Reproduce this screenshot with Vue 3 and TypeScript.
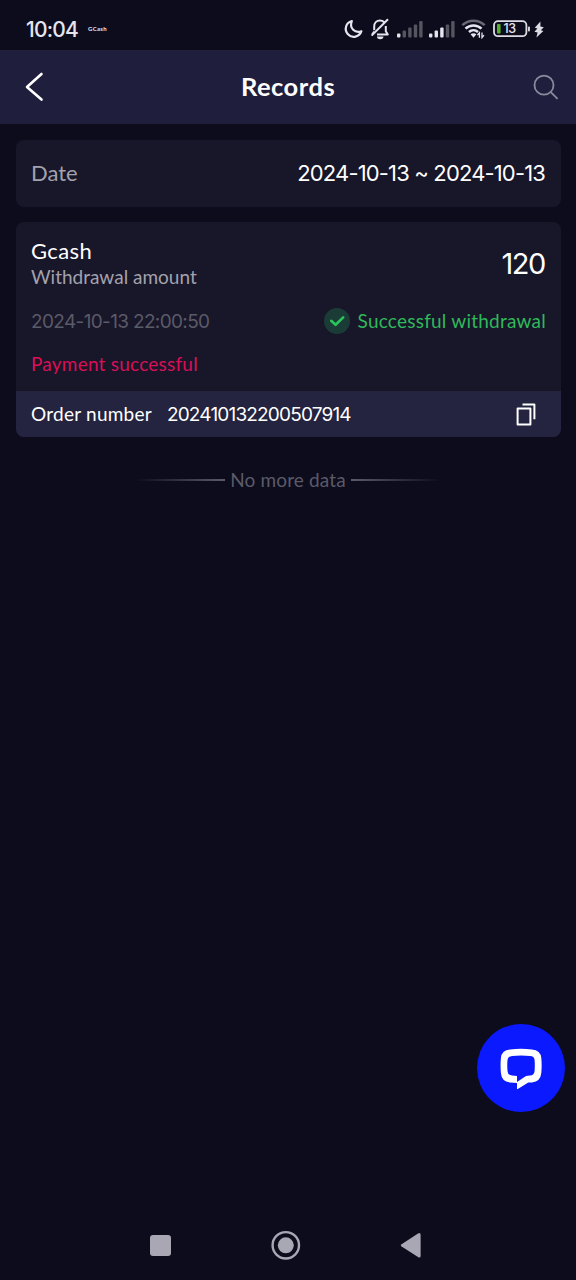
<script setup lang="ts">
interface SignalBar {
  x: number
  h: number
}

const bars: SignalBar[] = [
  { x: 0, h: 4 },
  { x: 5.6, h: 7 },
  { x: 11.2, h: 10 },
  { x: 16.8, h: 13 },
  { x: 22.2, h: 16.5 },
]
const signals: number[] = [1, 3]

const record = {
  channel: 'Gcash',
  kind: 'Withdrawal amount',
  amount: 120,
  time: '2024-10-13 22:00:50',
  status: 'Successful withdrawal',
  note: 'Payment successful',
  order: '202410132200507914',
}
const range = { from: '2024-10-13', to: '2024-10-13' }
</script>

<template>
  <div class="screen">
    <div class="status">
      <span class="clock">10:04</span>
      <span class="carrier">GCash</span>
      <div class="indicators">
        <svg class="moon" width="20" height="20" viewBox="0 0 20 20">
          <path d="M8.8 2A8 8 0 1 0 18.4 12.2C12 14.4 6 9.500 8.800 2Z" />
        </svg>
        <svg class="bell" width="20" height="22" viewBox="0 0 20 22">
          <path d="M4.200 12.200V8.600C4.200 5 6.600 2.500 10 2.500c1.700 0 3 .5 4 1.500M15.800 8v5.200l2 3.300H7M1.600 17.600 18 1.200M2.200 16.500l2-3" />
          <path class="clapper" d="M7 18.600h6.400a3.200 2.600 0 0 1-6.400 0Z" />
        </svg>
        <svg v-for="(level, s) in signals" :key="s" class="signal" width="26" height="18" viewBox="0 0 26 18">
          <rect v-for="(b, i) in bars" :key="i" :x="b.x" :y="17.5 - b.h" width="3.4" :height="b.h" rx="1" :class="{ on: i < level }" />
        </svg>
        <svg class="wifi" width="25" height="20" viewBox="0 0 25 20">
          <path class="dim" d="M1.300 6.200C7.600.1 17.400.1 23.700 6.200" />
          <path d="M4.500 9.600c4.500-4.300 11.500-4.300 16 0M8 13c2.600-2.400 6.400-2.400 9 0" />
          <path class="solid" d="M9.600 15.200c1.700-1.400 4.100-1.400 5.800 0L12.500 18.800Z" />
          <path class="arrows" d="M18.400 18.800v-5l-2 2.400M21 13.600v5l2-2.400" />
        </svg>
        <svg class="battery" width="37" height="18" viewBox="0 0 37 18">
          <rect class="shell" x="1" y="1.200" width="32.400" height="15" rx="4" />
          <rect class="charge" x="4" y="4" width="3.600" height="9.600" rx="1" />
          <rect class="tip" x="35" y="6.400" width="1.900" height="5" rx=".9" />
          <text x="10.400" y="13.300">13</text>
        </svg>
        <svg class="bolt" width="10" height="17" viewBox="0 0 10 17">
          <path d="M6.400.4.8 6.800 3.400 7.600.4 10.800 3.600 11.400 2.400 16.400 9.400 10 6.800 9.200 9.800 6.200 6.400 5.400Z" />
        </svg>
      </div>
    </div>

    <header class="bar">
      <svg class="back" width="20" height="30" viewBox="0 0 20 30">
        <path d="M16.500 2 2 15l14.500 12.600" />
      </svg>
      <h1>Records</h1>
      <svg class="search" width="26" height="26" viewBox="0 0 26 26">
        <circle cx="11" cy="11.200" r="9.500" />
        <path d="m18 18.400 6.600 6.400" />
      </svg>
    </header>

    <main>
      <section class="date">
        <span class="label">Date</span>
        <span class="range">{{ range.from }} ~ {{ range.to }}</span>
      </section>

      <article class="record">
        <div class="body">
          <div class="top">
            <div>
              <div class="channel">{{ record.channel }}</div>
              <div class="kind">{{ record.kind }}</div>
            </div>
            <span class="amount">{{ record.amount }}</span>
          </div>
          <div class="middle">
            <time>{{ record.time }}</time>
            <div class="state">
              <svg width="26" height="26" viewBox="0 0 26 26">
                <circle cx="13" cy="13" r="13" />
                <path d="m7.200 12.800 4.400 4 7.600-7.400" />
              </svg>
              <span>{{ record.status }}</span>
            </div>
          </div>
          <div class="note">{{ record.note }}</div>
        </div>
        <footer>
          <span class="order-label">Order number</span>
          <span class="order">{{ record.order }}</span>
          <svg class="copy" width="20" height="24" viewBox="0 0 20 24">
            <path d="M1.600 6.600H14.400V22.400H1.600ZM6.500 2.500H18.400V17.200" />
          </svg>
        </footer>
      </article>

      <div class="end"><i></i><span>No more data</span><i class="right"></i></div>
    </main>

    <button class="chat" aria-label="Chat">
      <svg width="42" height="42" viewBox="0 0 42 42">
        <path class="bubble" d="M10 2.400Q21 1.200 32 2.400Q40.600 3 41.300 11Q42 18 41.300 26Q40.500 34.500 32 35.600H28.300L17 42.500V36L10 35.600Q1.500 34.500 .9 26Q.2 18 .9 11Q1.500 3 10 2.400Z" />
        <path class="hole" d="M12 9Q21 8.200 30 9Q34.200 9.200 34.600 13Q35 18 34.600 24Q34.300 28.200 30 28.600L26 29L17 35V29L12 28.600Q7.800 28.200 7.500 24Q7 18 7.500 13Q7.800 9.300 12 9Z" />
      </svg>
    </button>

    <nav>
      <svg width="276" height="30" viewBox="0 0 276 30">
        <rect x="2" y="5" width="21" height="21" rx="3" />
        <circle class="ring" cx="137.800" cy="15.300" r="13.200" />
        <circle cx="137.800" cy="15.300" r="8" />
        <path d="M253.600 14.200 270 3.500Q272.600 2 272.600 5V25.700Q272.600 28.600 270 27L253.600 16.600Q252 15.400 253.600 14.200Z" />
      </svg>
    </nav>
  </div>
</template>

<style>
body {
  background: #0d0c1d;
}
</style>

<style scoped>
.screen {
  position: relative;
  box-sizing: border-box;
  width: 576px;
  height: 1280px;
  display: flex;
  flex-direction: column;
  overflow: hidden;
  background: #0d0c1d;
  color: #fff;
  font-family: Lato, "Open Sans", sans-serif;
  white-space: nowrap;
}
.clock,
.range,
.amount,
time,
.order,
.battery text {
  font-family: Inter, "Open Sans", sans-serif;
}
svg {
  display: block;
  flex: none;
}
.status {
  height: 50px;
  box-sizing: border-box;
  padding: 8px 32px 0 26px;
  display: flex;
  align-items: center;
  color: #e6e5ef;
}
.clock {
  font-size: 21px;
  font-weight: 500;
  letter-spacing: -0.8px;
}
.carrier {
  margin: 0 0 2px 10px;
  font-size: 6px;
  font-weight: 700;
  letter-spacing: 0.3px;
}
.indicators {
  margin-left: auto;
  display: flex;
  align-items: center;
}
.moon {
  fill: none;
  stroke: #e6e5ef;
  stroke-width: 2.2;
  stroke-linejoin: round;
}
.bell {
  margin: 0 1px 0 7px;
  fill: none;
  stroke: #e6e5ef;
  stroke-width: 2;
  stroke-linejoin: round;
}
.bell .clapper {
  fill: #e6e5ef;
  stroke: none;
}
.signal {
  margin-left: 6px;
  fill: #55545f;
}
.signal .on {
  fill: #e6e5ef;
}
.wifi {
  margin-left: 6px;
  fill: none;
  stroke: #e6e5ef;
  stroke-width: 2.5;
}
.wifi .dim {
  stroke: #696874;
}
.wifi .solid {
  fill: #e6e5ef;
  stroke: none;
}
.wifi .arrows {
  stroke-width: 1.3;
}
.battery {
  margin-left: 7px;
}
.battery .shell {
  fill: none;
  stroke: #dddce5;
  stroke-width: 1.8;
}
.battery .charge {
  fill: #55b02c;
}
.battery .tip {
  fill: #dddce5;
}
.battery text {
  fill: #e6e5ef;
  font-size: 12.5px;
  font-weight: 500;
  letter-spacing: -0.3px;
}
.bolt {
  margin-left: 4px;
  fill: #dddce5;
}
.bar {
  height: 74px;
  box-sizing: border-box;
  padding: 0 17px 0 25px;
  display: flex;
  align-items: center;
  justify-content: space-between;
  background: #201e3d;
}
.back {
  fill: none;
  stroke: #fff;
  stroke-width: 2.6;
  stroke-linecap: round;
  stroke-linejoin: round;
}
h1 {
  margin: 0 2px 2px 0;
  font-size: 25.5px;
  font-weight: 700;
  letter-spacing: 0.5px;
}
.search {
  fill: none;
  stroke: #8b8a9e;
  stroke-width: 1.8;
}
main {
  padding: 16px 15px 0 16px;
}
.date {
  height: 67px;
  box-sizing: border-box;
  padding: 0 15px 2px;
  display: flex;
  align-items: center;
  justify-content: space-between;
  border-radius: 8px;
  background: #181629;
  font-size: 22px;
}
.label {
  margin-bottom: 1px;
  color: #a3a2ad;
}
.range {
  margin-right: 1px;
  letter-spacing: -0.85px;
}
.record {
  margin-top: 15px;
  border-radius: 8px;
  overflow: hidden;
  background: #181629;
}
.body {
  height: 169px;
  box-sizing: border-box;
  padding: 15px 15px 0;
}
.top {
  display: flex;
  align-items: center;
  justify-content: space-between;
}
.channel {
  font-size: 22px;
  line-height: 27px;
  letter-spacing: 0.4px;
}
.kind {
  font-size: 19px;
  line-height: 26px;
  color: #a3a2ad;
}
.amount {
  margin-right: 1px;
  font-size: 29px;
  letter-spacing: -1.4px;
}
.middle {
  height: 26px;
  margin-top: 18px;
  display: flex;
  align-items: center;
  justify-content: space-between;
  font-size: 19px;
}
time {
  color: #5b5a68;
  letter-spacing: -0.65px;
}
.state {
  display: flex;
  align-items: center;
  gap: 8px;
  color: #2eb95a;
  letter-spacing: 0.23px;
}
.state span {
  margin-bottom: 2px;
}
.state circle {
  fill: #1b3b37;
}
.state path {
  fill: none;
  stroke: #2ac45c;
  stroke-width: 2.6;
  stroke-linecap: round;
  stroke-linejoin: round;
}
.note {
  margin-top: 17px;
  font-size: 19px;
  line-height: 26px;
  color: #d90f57;
  letter-spacing: 0.23px;
}
footer {
  height: 46px;
  box-sizing: border-box;
  padding: 0 25px 0 15px;
  display: flex;
  align-items: center;
  background: #242340;
  font-size: 19px;
}
.order-label {
  margin-bottom: 2px;
  letter-spacing: 0.24px;
}
.order {
  margin-left: 15px;
  letter-spacing: -0.82px;
}
.copy {
  margin-left: auto;
  fill: none;
  stroke: #fff;
  stroke-width: 2;
  stroke-linejoin: round;
}
.end {
  margin: 30px 0 0 -1px;
  height: 26px;
  display: flex;
  align-items: center;
  justify-content: center;
  gap: 5px;
  font-size: 19px;
  color: #5b5a68;
}
.end span {
  margin-bottom: 2px;
  letter-spacing: 0.15px;
}
.end i {
  width: 90px;
  height: 2px;
  background: linear-gradient(to left, #5b5a68, transparent);
}
.end .right {
  transform: scaleX(-1);
}
.chat {
  position: absolute;
  right: 11px;
  top: 1024px;
  width: 88px;
  height: 88px;
  padding: 0;
  border: 0;
  border-radius: 50%;
  display: flex;
  align-items: center;
  justify-content: center;
  background: #0b19ff;
}
.bubble {
  fill: #fff;
}
.hole {
  fill: #0b19ff;
}
nav {
  margin-top: auto;
  height: 50px;
  padding-left: 148px;
  fill: #a8a7b3;
}
.ring {
  fill: none;
  stroke: #a8a7b3;
  stroke-width: 2.4;
}
</style>
